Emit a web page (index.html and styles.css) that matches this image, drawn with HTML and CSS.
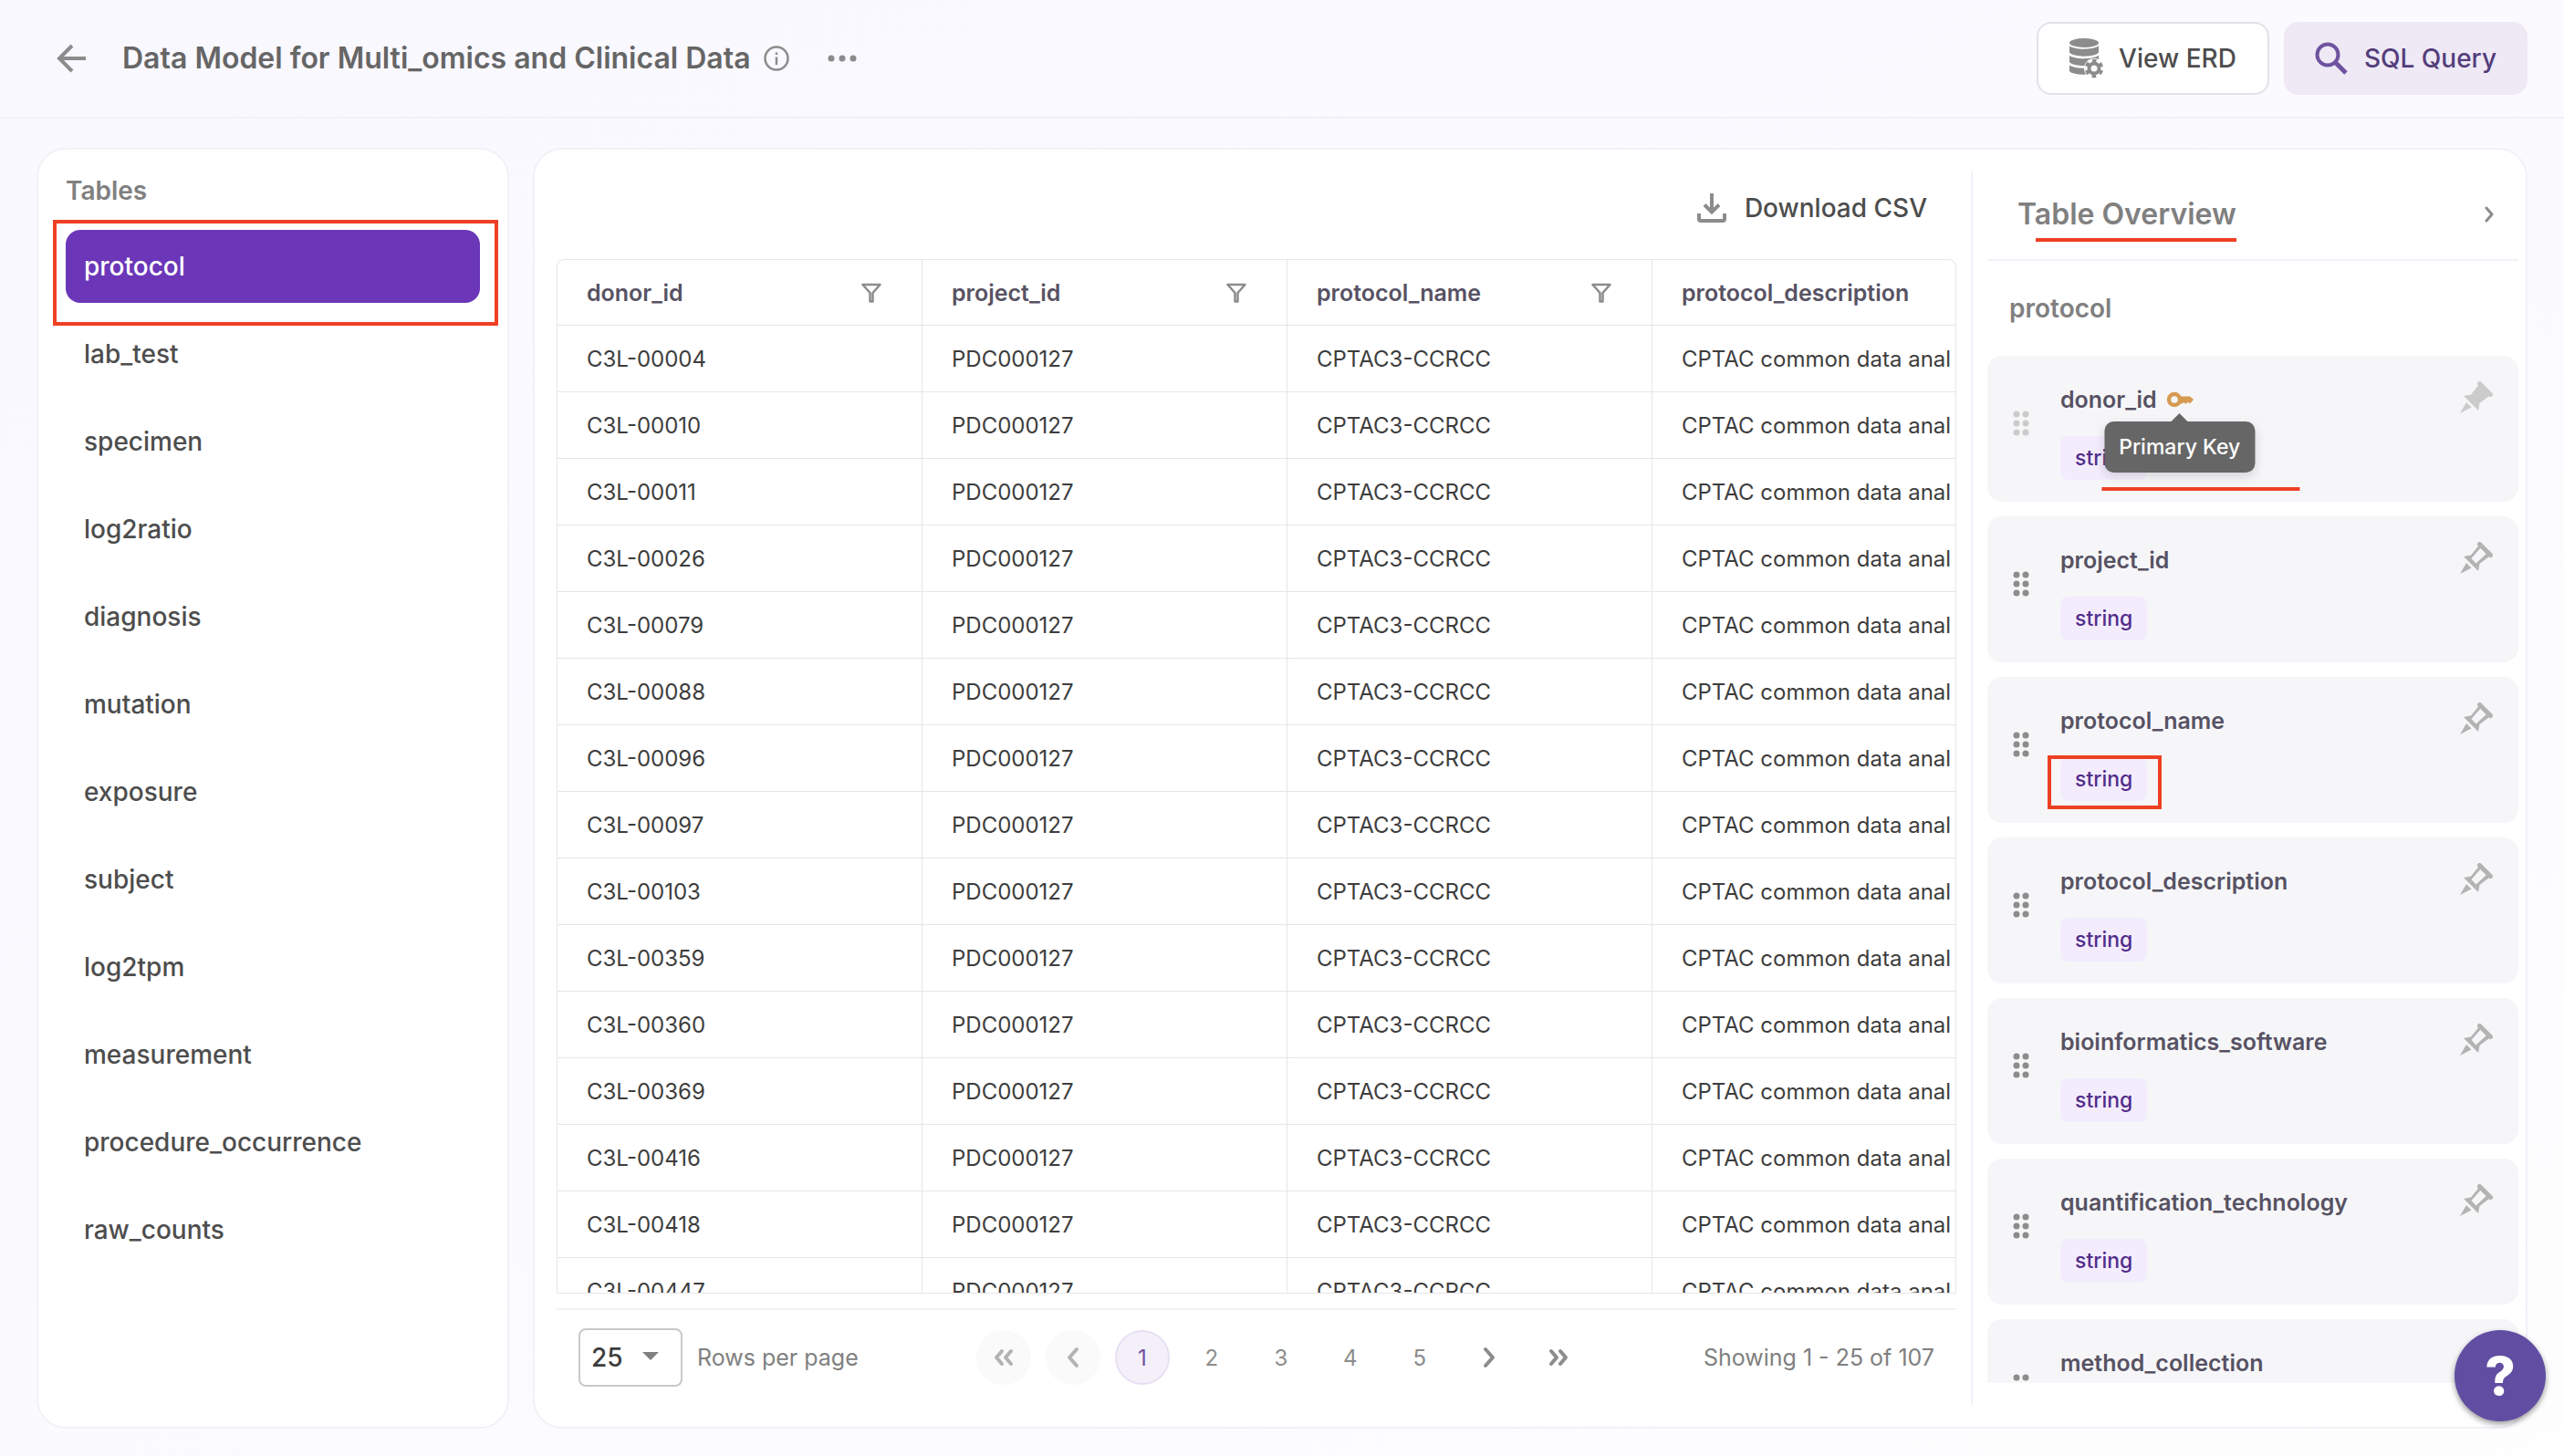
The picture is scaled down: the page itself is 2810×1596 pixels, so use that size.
FILE: index.html
```html
<!DOCTYPE html>
<html lang="en">
<head>
<meta charset="utf-8">
<title>Data Model for Multi_omics and Clinical Data</title>
<link rel="stylesheet" href="styles.css">
</head>
<body>
<svg class="sprite" aria-hidden="true">
  <symbol id="i-filter" viewBox="0 0 22 22"><path d="M1.500 2H20.500L12.500 11V20.500H9.500V11Z" fill="none" stroke="currentColor" stroke-width="2.500" stroke-linejoin="round"/></symbol>
  <symbol id="i-pin" viewBox="0 0 36 36"><path d="M21.500 2.500L33.500 14.500" stroke="currentColor" stroke-width="5" stroke-linecap="round"/><path d="M20.500 4L12 14.500L4 16L20 32L21.500 24L32 16ZM23.500 5.500L30 12L17.500 23.500L12.500 18Z" fill="currentColor" fill-rule="evenodd"/><path d="M7 23L12.500 28.500L0 35Z" fill="currentColor"/></symbol>
  <symbol id="i-pin-solid" viewBox="0 0 36 36"><path d="M21.500 2.500L33.500 14.500" stroke="currentColor" stroke-width="5" stroke-linecap="round"/><path d="M20.500 4L12 14.500L4 16L20 32L21.500 24L32 16Z" fill="currentColor"/><path d="M7 23L12.500 28.500L0 35Z" fill="currentColor"/></symbol>
  <symbol id="i-drag" viewBox="0 0 18 28"><g fill="currentColor"><circle cx="4" cy="4" r="3.500"/><circle cx="14" cy="4" r="3.500"/><circle cx="4" cy="14" r="3.500"/><circle cx="14" cy="14" r="3.500"/><circle cx="4" cy="24" r="3.500"/><circle cx="14" cy="24" r="3.500"/></g></symbol>
</svg>

<header class="topbar">
  <button class="icon-btn back" aria-label="Back"><svg width="32" height="32" viewBox="0 0 32 32"><path d="M32 16H3M17 2L3 16L17 30" fill="none" stroke="currentColor" stroke-width="4"/></svg></button>
  <h1 class="title">Data Model for Multi_omics and Clinical Data</h1>
  <button class="icon-btn info" aria-label="Info"><svg width="28" height="28" viewBox="0 0 28 28"><circle cx="14" cy="14" r="12.500" fill="none" stroke="currentColor" stroke-width="2.500"/><path d="M14 12.500V21M14 7.500V10" stroke="currentColor" stroke-width="2.500"/></svg></button>
  <button class="icon-btn more" aria-label="More"><svg width="32" height="8" viewBox="0 0 32 8"><g fill="currentColor"><circle cx="4" cy="4" r="3.500"/><circle cx="16" cy="4" r="3.500"/><circle cx="28" cy="4" r="3.500"/></g></svg></button>
  <div class="actions">
    <button class="btn btn-outline"><svg width="38" height="44" viewBox="0 0 38 44"><g fill="currentColor"><ellipse cx="16" cy="5" rx="16" ry="5"/><path d="M0 8C4 13 28 13 32 8V15.500C28 21 4 21 0 15.500Z"/><path d="M0 18.500C4 23.500 28 23.500 32 18.500V26C28 31.500 4 31.500 0 26Z"/><path d="M0 29C4 34 28 34 32 29V36C28 41 4 41 0 36Z"/></g><circle cx="27" cy="33" r="11" fill="#fff"/><circle cx="27" cy="33" r="5.500" fill="none" stroke="currentColor" stroke-width="4"/><circle cx="27" cy="33" r="8.500" fill="none" stroke="currentColor" stroke-width="3.500" stroke-dasharray="4.450 4.450" stroke-dashoffset="-2.200"/></svg>View ERD</button>
    <button class="btn btn-tonal"><svg width="36" height="36" viewBox="0 0 36 36"><circle cx="14" cy="14" r="11.500" fill="none" stroke="currentColor" stroke-width="4"/><path d="M22 22L34 34" stroke="currentColor" stroke-width="5"/></svg><span>SQL Query</span></button>
  </div>
</header>

<main class="layout">
  <nav class="card sidebar" aria-label="Tables">
    <h2 class="side-title">Tables</h2>
    <ul class="table-list" id="tables"></ul>
  </nav>

  <section class="card content">
    <div class="grid-panel">
      <div class="toolbar"><button class="download"><svg width="32" height="32" viewBox="0 0 32 32"><path d="M16 0V20M8 12.500L16 20.500L24 12.500" fill="none" stroke="currentColor" stroke-width="4"/><path d="M2 22V28Q2 30 4 30H28Q30 30 30 28V22" fill="none" stroke="currentColor" stroke-width="4"/></svg><span>Download CSV</span></button></div>
      <div class="table-wrap"><table class="data"><thead><tr id="head"></tr></thead><tbody id="rows"></tbody></table></div>
      <footer class="pager">
        <div class="rows-per"><span class="select-box"><select id="size"><option>25</option><option>50</option></select></span><label for="size">Rows per page</label></div>
        <div class="pages">
          <button class="page off" aria-label="First"><svg width="24" height="20" viewBox="0 0 24 20"><path d="M10 3L4 10L10 17M20 3L14 10L20 17"/></svg></button>
          <button class="page off" aria-label="Previous"><svg width="24" height="24" viewBox="0 0 24 24"><path d="M16 3L8 12L16 21"/></svg></button>
          <button class="page on">1</button><button class="page">2</button><button class="page">3</button><button class="page">4</button><button class="page">5</button>
          <button class="page" aria-label="Next"><svg width="24" height="24" viewBox="0 0 24 24"><path d="M8 3L16 12L8 21"/></svg></button>
          <button class="page" aria-label="Last"><svg width="24" height="20" viewBox="0 0 24 20"><path d="M4 3L10 10L4 17M14 3L20 10L14 17"/></svg></button>
        </div>
        <p class="showing">Showing 1 - 25 of 107</p>
      </footer>
    </div>
    <aside class="overview">
      <div class="overview-head"><h2 class="marked">Table Overview</h2><button class="icon-btn" aria-label="Collapse"><svg width="12" height="18" viewBox="0 0 12 18"><path d="M3 2L9 9L3 16" fill="none" stroke="currentColor" stroke-width="3" stroke-linecap="round" stroke-linejoin="round"/></svg></button></div>
      <h3 class="overview-sub">protocol</h3>
      <ul class="fields" id="fields"></ul>
    </aside>
  </section>
</main>
<button class="help" aria-label="Help">?</button>
<script src="app.js"></script>
</body>
</html>
```

FILE: styles.css
```css
* { box-sizing: border-box; }
html, body { height: 100%; }
body {
  margin: 0;
  display: flex;
  flex-direction: column;
  overflow: hidden;
  background: linear-gradient(155deg, #f9f8ff 0%, #fafaff 40%, #fefeff 100%);
  color: #4d4d4d;
  font-family: Inter, "Liberation Sans", sans-serif;
  font-size: 24px;
}
h1, h2, h3, p, ul { margin: 0; padding: 0; }
ul { list-style: none; }
button { font: inherit; color: inherit; background: none; border: 0; padding: 0; cursor: pointer; }
svg { display: block; flex: none; }
.sprite { position: absolute; width: 0; height: 0; }
.icon-btn { color: #8c8c8c; }

.topbar {
  display: flex;
  align-items: center;
  flex: none;
  height: 130px;
  padding: 0 40px 0 62px;
  border-bottom: 2px solid #f2f1f8;
}
.title { margin-left: 40px; font-size: 32px; line-height: 40px; font-weight: 600; color: #666; }
.info { margin-left: 14px; }
.more { margin-left: 42px; }
.actions { display: flex; gap: 16px; margin-left: auto; }
.btn {
  display: flex;
  align-items: center;
  gap: 16px;
  height: 80px;
  padding: 0 34px;
  border-radius: 16px;
  font-size: 28px;
  font-weight: 500;
}
.btn svg { color: #8c8c8c; }
.btn-outline { border: 2px solid #e3e1e9; background: #fff; }
.btn-tonal { background: #eee9f5; color: #543d7c; gap: 18px; }
.btn-tonal svg { color: #6f529f; }

.layout { flex: 1; min-height: 0; display: flex; gap: 26px; padding: 32px 40px 30px; }
.card { background: #fff; border: 2px solid #f2f1f8; border-radius: 32px; }

.sidebar { flex: none; width: 518px; padding: 28px 30px; }
.side-title { font-size: 28px; font-weight: 600; line-height: 34px; color: #808080; }
.table-list { display: grid; gap: 16px; margin-top: 26px; }
.table-list li { position: relative; }
.table-list a {
  display: block;
  padding: 0 20px;
  line-height: 80px;
  border-radius: 16px;
  font-size: 28px;
  font-weight: 500;
  color: #4d4d4d;
  text-decoration: none;
}
.table-list .active { background: #6b37b8; color: #fff; }
.callout::after {
  content: "";
  position: absolute;
  inset: -11px -20px -25px -14px;
  border: 4px solid #ee4023;
}

.content { flex: 1; min-width: 0; display: flex; padding: 24px 8px 24px 24px; }
.grid-panel { flex: 1; min-width: 0; display: flex; flex-direction: column; padding-right: 16px; }
.toolbar { display: flex; justify-content: flex-end; align-items: center; flex: none; height: 96px; padding: 0 32px 16px; }
.download { display: flex; align-items: center; gap: 20px; font-size: 28px; font-weight: 500; }
.download svg { color: #8c8c8c; }
.table-wrap { flex: 1; min-height: 0; overflow: hidden; border: 1px solid #e6e6eb; border-radius: 8px 8px 0 0; }
.data { width: 1600px; table-layout: fixed; border-collapse: separate; border-spacing: 0; }
.data th, .data td {
  height: 73px;
  padding: 0 32px;
  border-right: 1px solid #e6e6eb;
  border-bottom: 1px solid #e6e6eb;
  text-align: left;
  white-space: nowrap;
  overflow: hidden;
}
.data th { height: 72px; font-size: 25px; font-weight: 600; color: #575263; }
.data td { color: #3d3d3d; }
.th { display: flex; justify-content: space-between; align-items: center; }
.th button { margin-right: 12px; color: #8c8c8c; }

.pager {
  display: flex;
  justify-content: space-between;
  align-items: center;
  flex: none;
  margin-top: 16px;
  height: 106px;
  padding: 0 24px;
  border-top: 2px solid #f2f2f2;
  font-size: 25px;
  color: #808080;
}
.rows-per { display: flex; align-items: center; gap: 16px; }
.select-box { position: relative; }
.select-box::after {
  content: "";
  position: absolute;
  right: 26px;
  top: 26px;
  border: 9px solid transparent;
  border-top-color: #808080;
  border-bottom: 0;
}
.select-box select {
  appearance: none;
  display: block;
  width: 114px;
  height: 64px;
  padding: 0 12px;
  border: 2px solid #c9c9c9;
  border-radius: 8px;
  background: #fff;
  font: 500 28px Inter, sans-serif;
  color: #3d3d3d;
}
.pages { display: flex; gap: 16px; }
.page {
  display: flex;
  align-items: center;
  justify-content: center;
  width: 60px;
  height: 60px;
  border-radius: 50%;
  font-size: 24px;
  color: #8c8c8c;
}
.page path { fill: none; stroke: currentColor; stroke-width: 4; stroke-linecap: round; stroke-linejoin: round; }
.off { background: #fafafa; color: #b3b3b3; }
.on { background: #f4f0f9; border: 2px solid #e7e0f3; color: #6f529f; }

.overview { flex: none; width: 600px; display: flex; flex-direction: column; padding: 0 0 24px 16px; border-left: 2px solid #f2f1f8; }
.overview-head {
  display: flex;
  align-items: center;
  justify-content: space-between;
  flex: none;
  height: 98px;
  padding: 0 26px 2px 33px;
  border-bottom: 2px solid #f2f1f8;
}
.marked { position: relative; font-size: 32px; line-height: 40px; font-weight: 600; color: #808080; }
.marked::after { content: ""; position: absolute; left: 20px; right: 0; bottom: -10px; height: 4px; background: #ee4023; }
.overview-sub { padding: 34px 24px; font-size: 28px; line-height: 36px; font-weight: 600; color: #808080; }
.fields { flex: 1; min-height: 0; overflow: hidden; display: flex; flex-direction: column; gap: 16px; }
.field {
  flex: none;
  display: flex;
  height: 160px;
  padding: 28px 28px 24px;
  border-radius: 16px;
  background: #f6f6f9;
}
.field > svg { align-self: center; margin-bottom: 16px; color: #8c8c8c; }
.field-body { flex: 1; display: flex; flex-direction: column; align-items: flex-start; justify-content: space-between; padding-left: 34px; }
.field-name { display: flex; align-items: center; gap: 10px; font-size: 25px; line-height: 40px; font-weight: 600; color: #575263; }
.chip { position: relative; padding: 0 16px; border-radius: 8px; background: #f3ecfd; font-size: 23px; line-height: 48px; font-weight: 500; color: #522d8b; }
.chip.callout::after { inset: -2px -16px -9px -14px; }
.pin { align-self: flex-start; color: #b3b3b3; }
.locked > svg, .locked .pin { color: #cbcbcb; }
.key { position: relative; color: #d69b51; }
.tooltip {
  position: absolute;
  z-index: 1;
  left: 50%;
  top: 34px;
  transform: translateX(-50%);
  padding: 0 16px;
  border-radius: 10px;
  background: #666;
  box-shadow: 0 4px 12px rgba(0, 0, 0, .14);
  font-size: 23px;
  line-height: 56px;
  font-weight: 500;
  white-space: nowrap;
  color: #fff;
}
.tooltip::before { content: ""; position: absolute; left: 50%; top: -9px; margin-left: -10px; border: 10px solid transparent; border-top: 0; border-bottom-color: #666; }
.tooltip::after { content: ""; position: absolute; left: -3px; right: -49px; bottom: -20px; height: 4px; background: #ee4023; }

.help {
  position: fixed;
  right: 20px;
  bottom: 38px;
  width: 100px;
  height: 100px;
  border-radius: 50%;
  background: #614ea3;
  box-shadow: 0 3px 6px rgba(0, 0, 0, .4);
  color: #fff;
  font-size: 58px;
  font-weight: 800;
}
```

FILE: app.js
```js
const byId = (id) => document.getElementById(id);

const tables = ['protocol', 'lab_test', 'specimen', 'log2ratio', 'diagnosis', 'mutation', 'exposure', 'subject', 'log2tpm', 'measurement', 'procedure_occurrence', 'raw_counts'];
byId('tables').innerHTML = tables.map((name, i) =>
  `<li${i ? '' : ' class="callout"'}><a href="#${name}"${i ? '' : ' class="active"'}>${name}</a></li>`).join('');

const columns = ['donor_id', 'project_id', 'protocol_name', 'protocol_description'];
byId('head').innerHTML = columns.map((name, i) =>
  `<th scope="col"><div class="th">${name}${i < 3 ? `<button aria-label="Filter ${name}"><svg width="22" height="22"><use href="#i-filter"/></svg></button>` : ''}</div></th>`).join('');

const donors = ['00004', '00010', '00011', '00026', '00079', '00088', '00096', '00097', '00103', '00359', '00360', '00369', '00416', '00418', '00447'];
byId('rows').innerHTML = donors.map((id) =>
  `<tr><td>C3L-${id}</td><td>PDC000127</td><td>CPTAC3-CCRCC</td><td>CPTAC common data anal</td></tr>`).join('');

const key = '<span class="key"><svg width="30" height="20" viewBox="0 0 30 20"><circle cx="9" cy="10" r="6" fill="none" stroke="currentColor" stroke-width="4.500"/><path d="M15 6.500H26L30 10L26 14.500L24 12.500L21.500 15L19.500 13L17.500 14.500H15Z" fill="currentColor"/></svg><span class="tooltip" role="tooltip">Primary Key</span></span>';
const fields = ['donor_id', 'project_id', 'protocol_name', 'protocol_description', 'bioinformatics_software', 'quantification_technology', 'method_collection'];
byId('fields').innerHTML = fields.map((name, i) => `
  <li class="field${i ? '' : ' locked'}">
    <svg width="18" height="28"><use href="#i-drag"/></svg>
    <div class="field-body"><div class="field-name">${name}${i ? '' : key}</div><span class="chip${i === 2 ? ' callout' : ''}">string</span></div>
    <button class="pin" aria-label="Pin ${name}"><svg width="36" height="36"><use href="#i-pin${i ? '' : '-solid'}"/></svg></button>
  </li>`).join('');
```
